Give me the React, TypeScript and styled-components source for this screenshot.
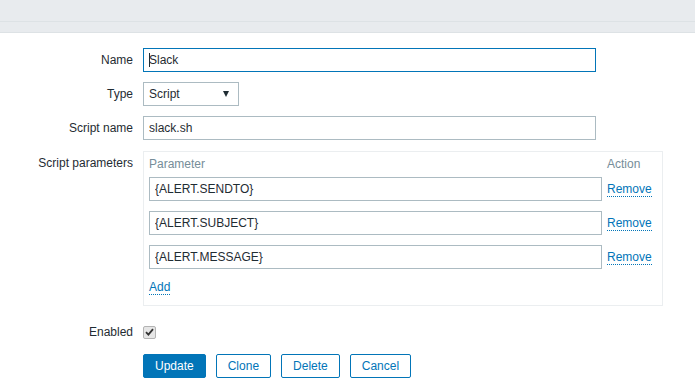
import React from "react";
import styled, { createGlobalStyle } from "styled-components";

const Global = createGlobalStyle`
  body {
    margin: 0;
    background: #fff;
    font-family: "Liberation Sans", Arial, sans-serif;
    font-size: 12px;
    color: #1f2c33;
  }
`;

const TopBar = styled.div`
  height: 21px;
  background: #e8ebee;
  border-bottom: 1px solid #dde2e5;
`;

const SubBar = styled.div`
  height: 10px;
  background: #e8ebee;
  border-bottom: 1px solid #dde2e5;
`;

const Form = styled.div`
  display: grid;
  grid-template-columns: 133px 1fr;
  column-gap: 10px;
  row-gap: 10px;
  margin-top: 15px;
`;

const Label = styled.label<{ $offset?: number }>`
  text-align: right;
  line-height: 24px;
  margin-top: ${(p) => p.$offset || 0}px;
  align-self: start;
`;

const Field = styled.div<{ $gap?: number }>`
  display: flex;
  align-items: center;
  min-height: 24px;
  margin-top: ${(p) => p.$gap || 0}px;
`;

const Input = styled.input<{ $width?: number; $focus?: boolean }>`
  box-sizing: border-box;
  width: ${(p) => p.$width || 453}px;
  height: 24px;
  padding: 0 5px;
  border: 1px solid ${(p) => (p.$focus ? "#0275b8" : "#acbbc2")};
  font-family: inherit;
  font-size: 12px;
  color: #1f2c33;
  background: #fff;
  outline: none;
`;

const InputWrap = styled.div`
  position: relative;
`;

const Caret = styled.span`
  position: absolute;
  left: 6px;
  top: 5px;
  width: 1px;
  height: 14px;
  background: #1f2c33;
`;

const Select = styled.div`
  box-sizing: border-box;
  width: 96px;
  height: 24px;
  border: 1px solid #acbbc2;
  padding: 0 9px 0 5px;
  display: flex;
  align-items: center;
  justify-content: space-between;
`;

const Arrow = styled.span`
  width: 0;
  height: 0;
  border-left: 3.5px solid transparent;
  border-right: 3.5px solid transparent;
  border-top: 6px solid #1f2c33;
`;

const ParamBox = styled.div`
  box-sizing: border-box;
  width: 520px;
  height: 155px;
  border: 1px solid #ebeef0;
  padding: 5px 5px 0 5px;
  display: grid;
  grid-template-columns: 453px auto;
  grid-auto-rows: min-content;
  column-gap: 5px;
  align-items: center;
`;

const Head = styled.div`
  color: #768d99;
  line-height: 14px;
  margin-bottom: 6px;
`;

const ParamInput = styled(Input)`
  margin-bottom: 10px;
`;

const Link = styled.a`
  color: #0275b8;
  text-decoration: none;
  border-bottom: 1px dotted #0275b8;
  line-height: 14px;
  justify-self: start;
  cursor: pointer;
`;

const RemoveLink = styled(Link)`
  margin-bottom: 10px;
`;

const AddLink = styled(Link)`
  margin-top: 1px;
`;

const Check = styled.span`
  box-sizing: border-box;
  width: 13px;
  height: 13px;
  border: 1px solid #b3b3b3;
  border-radius: 2px;
  background: #e6e6e6;
  display: flex;
  align-items: center;
  justify-content: center;
`;

const Buttons = styled.div`
  display: flex;
  gap: 10px;
`;

const Button = styled.button<{ $primary?: boolean }>`
  box-sizing: border-box;
  height: 24px;
  padding: 0 11px;
  border: 1px solid #0275b8;
  border-radius: 2px;
  background: ${(p) => (p.$primary ? "#0275b8" : "#fff")};
  color: ${(p) => (p.$primary ? "#fff" : "#0275b8")};
  font-family: inherit;
  font-size: 12px;
`;

const params = ["{ALERT.SENDTO}", "{ALERT.SUBJECT}", "{ALERT.MESSAGE}"];

export default function App() {
  return (
    <>
      <Global />
      <TopBar />
      <SubBar />
      <Form>
        <Label>Name</Label>
        <Field>
          <InputWrap>
            <Input $focus defaultValue="Slack" />
            <Caret />
          </InputWrap>
        </Field>

        <Label>Type</Label>
        <Field>
          <Select>
            <span>Script</span>
            <Arrow />
          </Select>
        </Field>

        <Label>Script name</Label>
        <Field>
          <Input defaultValue="slack.sh" />
        </Field>

        <Label $offset={1}>Script parameters</Label>
        <Field $gap={1}>
          <ParamBox>
            <Head>Parameter</Head>
            <Head>Action</Head>
            {params.map((p) => (
              <React.Fragment key={p}>
                <ParamInput defaultValue={p} />
                <RemoveLink>Remove</RemoveLink>
              </React.Fragment>
            ))}
            <AddLink>Add</AddLink>
          </ParamBox>
        </Field>

        <Label $offset={4}>Enabled</Label>
        <Field $gap={4}>
          <Check>
            <svg width="9" height="8" viewBox="0 0 9 8">
              <path d="M1 4.2 L3.4 6.6 L8 1.2" fill="none" stroke="#333" strokeWidth="1.8" />
            </svg>
          </Check>
        </Field>

        <span />
        <Buttons>
          <Button $primary>Update</Button>
          <Button>Clone</Button>
          <Button>Delete</Button>
          <Button>Cancel</Button>
        </Buttons>
      </Form>
    </>
  );
}
